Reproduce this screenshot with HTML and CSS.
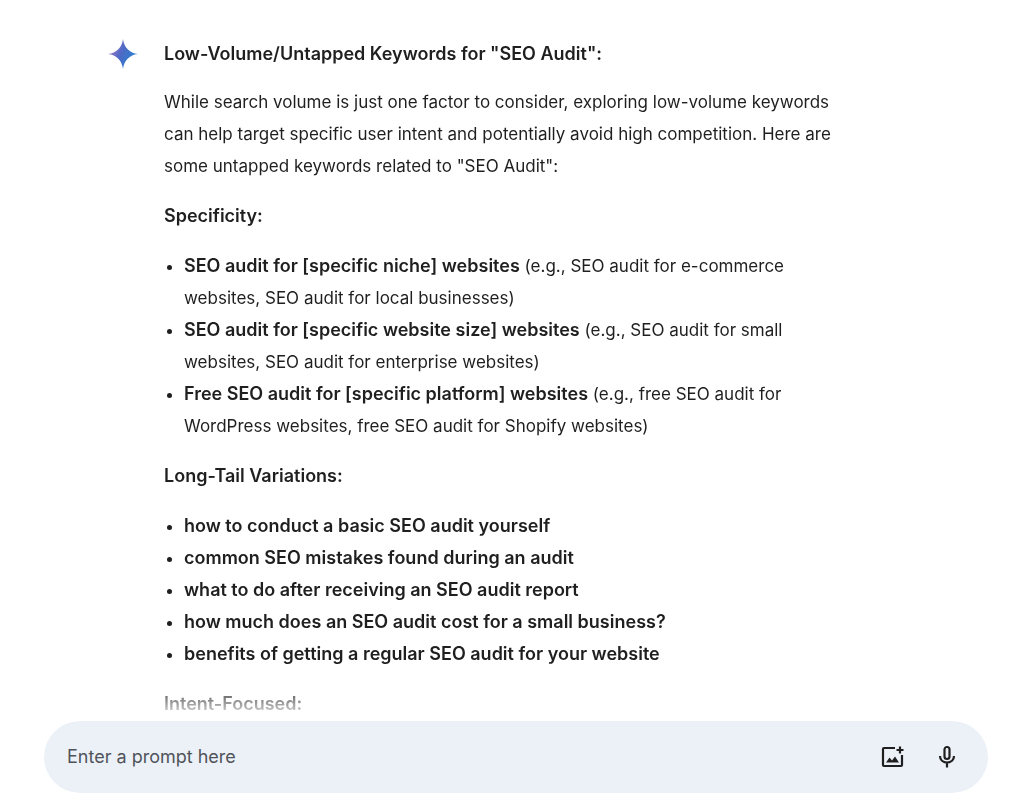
FILE: index.html
```html
<!DOCTYPE html>
<html lang="en">
<head>
    <meta charset="UTF-8">
    <meta name="viewport" content="width=device-width, initial-scale=1.0">
    <title>SEO Audit Keywords</title>
    <link rel="stylesheet" href="styles.css">
</head>
<body>

<!-- Conversation -->
<main class="chat">
    <svg class="avatar" viewBox="0 0 30 30" aria-hidden="true">
        <defs>
            <linearGradient id="spark" x1="0" y1="0.2" x2="1" y2="0.7">
                <stop offset="0.15" stop-color="#8f78c4"/>
                <stop offset="0.45" stop-color="#4f69c6"/>
                <stop offset="0.75" stop-color="#3579cc"/>
                <stop offset="1" stop-color="#5aa0dc"/>
            </linearGradient>
        </defs>
        <path fill="url(#spark)" d="M15 0C16 8.500 21.500 14 30 15C21.500 16 16 21.500 15 30C14 21.500 8.500 16 0 15C8.500 14 14 8.500 15 0Z"/>
    </svg>

    <article class="answer">
        <h1>Low-Volume/Untapped Keywords for "SEO Audit":</h1>
        <p>While search volume is just one factor to consider, exploring low-volume keywords can help target specific user intent and potentially avoid high competition. Here are some untapped keywords related to "SEO Audit":</p>

        <h2>Specificity:</h2>
        <ul>
            <li><strong>SEO audit for [specific niche] websites</strong> (e.g., SEO audit for e-commerce websites, SEO audit for local businesses)</li>
            <li><strong>SEO audit for [specific website size] websites</strong> (e.g., SEO audit for small websites, SEO audit for enterprise websites)</li>
            <li><strong>Free SEO audit for [specific platform] websites</strong> (e.g., free SEO audit for WordPress websites, free SEO audit for Shopify websites)</li>
        </ul>

        <h2>Long-Tail Variations:</h2>
        <ul>
            <li><strong>how to conduct a basic SEO audit yourself</strong></li>
            <li><strong>common SEO mistakes found during an audit</strong></li>
            <li><strong>what to do after receiving an SEO audit report</strong></li>
            <li><strong>how much does an SEO audit cost for a small business?</strong></li>
            <li><strong>benefits of getting a regular SEO audit for your website</strong></li>
        </ul>

        <h2>Intent-Focused:</h2>
    </article>
</main>

<!-- Prompt bar -->
<form class="prompt-bar">
    <input class="prompt-input" type="text" placeholder="Enter a prompt here" aria-label="Enter a prompt here">
    <button class="icon-button" type="button" aria-label="Upload image">
        <svg viewBox="0 0 24 24" aria-hidden="true">
            <path fill="none" stroke="currentColor" stroke-width="2.200" stroke-linejoin="round" d="M14 3H3Q2 3 2 4V20Q2 21 3 21H20Q21 21 21 20V10"/>
            <path fill="none" stroke="currentColor" stroke-width="2.200" d="M19 1.500V8.500M15.500 5H22.500"/>
            <path fill="currentColor" d="M5 17.500L8.500 12.500L11 15.500L14 11.500L18 17.500Z"/>
        </svg>
    </button>
    <button class="icon-button" type="button" aria-label="Use microphone">
        <svg viewBox="0 0 24 24" aria-hidden="true">
            <rect x="9.500" y="2" width="5" height="12" rx="2.500" fill="none" stroke="currentColor" stroke-width="2.200"/>
            <path fill="none" stroke="currentColor" stroke-width="2.200" d="M5 11C5 15 8 17.500 12 17.500S19 15 19 11M12 17.500V22.500"/>
        </svg>
    </button>
</form>

</body>
</html>
```
FILE: styles.css
```css
* {
    box-sizing: border-box;
}
body {
    margin: 0;
    height: 100vh;
    display: flex;
    flex-direction: column;
    background-color: #fff;
    color: #1f1f1f;
    font-family: Inter, "Liberation Sans", sans-serif;
    font-size: 17px;
    line-height: 32px;
}
.chat {
    flex: 1;
    min-height: 0;
    overflow: hidden;
    display: flex;
    align-items: flex-start;
    gap: 26px;
    padding: 38px 174px 0 108px;
    /* fades the text out just above the prompt bar */
    mask-image: linear-gradient(to top, transparent, #000 40px);
}
.avatar {
    flex: none;
    width: 30px;
    height: 32px;
}
.answer {
    flex: 1;
}
.answer h1,
.answer h2 {
    margin: 0 0 18px;
    font-size: 18px;
    font-weight: 600;
}
.answer h1 {
    margin-bottom: 16px;
}
.answer p {
    margin: 0 0 18px;
}
.answer ul {
    margin: 0 0 18px;
    padding-left: 20px;
}
.answer strong {
    font-size: 18px;
    font-weight: 600;
    line-height: 1;
}
.prompt-bar {
    flex: none;
    display: flex;
    align-items: center;
    gap: 30px;
    height: 72px;
    margin: 0 36px 13px 44px;
    padding: 0 29px 0 23px;
    border-radius: 36px;
    background-color: #ecf1f8;
}
.prompt-input {
    flex: 1;
    min-width: 0;
    padding: 0;
    border: none;
    outline: none;
    background: none;
    color: #1f1f1f;
    font: inherit;
    font-size: 18px;
}
.prompt-input::placeholder {
    color: #50545a;
    opacity: 1;
}
.icon-button {
    display: flex;
    padding: 0;
    border: none;
    background: none;
    color: #1f1f1f;
    cursor: pointer;
}
.icon-button svg {
    width: 24px;
    height: 24px;
}
```
